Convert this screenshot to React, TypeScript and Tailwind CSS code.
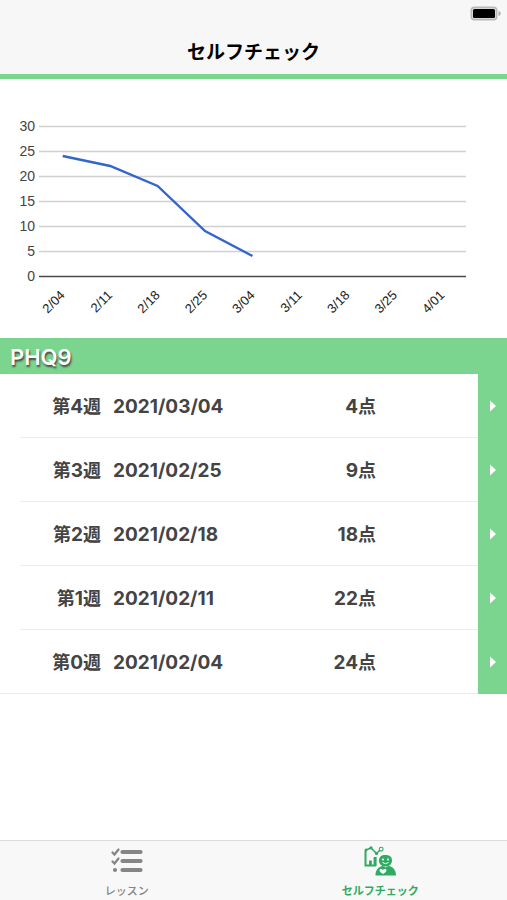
type CheckResult = {
  week: number;
  date: string;
  score: number;
};

const results: CheckResult[] = [
  { week: 4, date: "2021/03/04", score: 4 },
  { week: 3, date: "2021/02/25", score: 9 },
  { week: 2, date: "2021/02/18", score: 18 },
  { week: 1, date: "2021/02/11", score: 22 },
  { week: 0, date: "2021/02/04", score: 24 },
];

const ticks = [0, 5, 10, 15, 20, 25, 30];

const weeks = [
  "2/04",
  "2/11",
  "2/18",
  "2/25",
  "3/04",
  "3/11",
  "3/18",
  "3/25",
  "4/01",
];

const LEFT = 39;
const RIGHT = 466;
const BASE = 197;
const STEP = (RIGHT - LEFT) / weeks.length;

const xOf = (index: number) => LEFT + STEP * (index + 0.5);
const yOf = (score: number) => BASE - score * 5;

const BatteryIcon = () => (
  <svg width="31" height="16" viewBox="0 0 31 16" aria-hidden="true">
    <rect x="0.5" y="0.5" width="27" height="14" rx="4" fill="#b9b9b9" />
    <rect x="2" y="2" width="24" height="11" rx="2.5" fill="#d6d6d6" />
    <rect x="3" y="3" width="22" height="9" rx="1.5" fill="#000" />
    <path d="M28.5 5c1.6.6 2.3 1.4 2.3 2.5s-.7 1.9-2.3 2.5z" fill="#b0b0b0" />
  </svg>
);

const LessonIcon = () => (
  <svg width="32" height="26" viewBox="0 0 32 26" aria-hidden="true">
    <g fill="none" stroke="#858585" strokeLinecap="round">
      <path d="M11.5 4H29.5M11.5 13H29.5M11.5 22H29.5" strokeWidth="4.2" />
      <path d="M1.5 4.5L3.5 6.5L7.5 1.500M1.5 13.5L3.5 15.5L7.5 10.5" strokeWidth="2.2" />
    </g>
    <circle cx="4" cy="22" r="2.1" fill="#858585" />
  </svg>
);

const SelfCheckIcon = () => (
  <svg width="32" height="31" viewBox="0 0 32 31" aria-hidden="true">
    <g fill="none" stroke="#2fab63">
      <path d="M1.5 5V19.5H12" strokeWidth="2" />
      <path d="M2 4L7 2L12.5 7.5L16 4" strokeWidth="1.5" />
      <circle cx="17.2" cy="3.2" r="1.9" strokeWidth="1.1" />
    </g>
    <g fill="#2fab63">
      <circle cx="2" cy="4" r="1.5" />
      <circle cx="7" cy="1.8" r="1.6" />
      <circle cx="12.5" cy="7.5" r="1.6" />
      <rect x="5" y="14.5" width="2.8" height="5" />
      <rect x="9.6" y="11" width="3" height="9" />
      <path d="M21.5 9C26 9 28 11.2 28 14.5S25.5 20.5 21.5 20.5S15 18 15 14.5S17 9 21.5 9Z" />
      <path d="M11.5 29.5C11.5 24 14.5 20.5 19 20L21.5 21.5L24.5 20C29 20.5 32 24 32 29.5Z" />
    </g>
    <circle cx="19" cy="13.5" r="1.1" fill="#fff" />
    <circle cx="24" cy="13.5" r="1.1" fill="#fff" />
    <path d="M18.5 16.5Q21.5 19 24.5 16.5" fill="none" stroke="#fff" />
    <path
      d="M19 28C17 26.7 15.5 25.8 15.5 24.3C15.5 22.7 18 22.3 19 24C20 22.3 22.5 22.7 22.5 24.3C22.5 25.8 21 26.7 19 28Z"
      fill="#fff"
    />
  </svg>
);

const ScoreChart = () => {
  const points = [...results]
    .reverse()
    .map((result, index) => `${xOf(index)},${yOf(result.score)}`)
    .join(" ");

  return (
    <svg
      viewBox="0 0 507 259"
      className="block w-full font-['Liberation_Sans',sans-serif] text-[14px]"
      role="img"
      aria-label="PHQ9"
    >
      {ticks.map((tick) => (
        <g key={tick}>
          <line
            x1={LEFT}
            x2={RIGHT}
            y1={yOf(tick) + 0.5}
            y2={yOf(tick) + 0.5}
            stroke={tick === 0 ? "#4a4a4a" : "#d0d0d0"}
            strokeWidth={tick === 0 ? 1.4 : 1.6}
          />
          <text x="35" y={yOf(tick) + 5} textAnchor="end" fill="#444">
            {tick}
          </text>
        </g>
      ))}
      {weeks.map((week, index) => (
        <text
          key={week}
          textAnchor="end"
          fill="#222"
          fontSize="13"
          transform={`translate(${xOf(index) + 3} 217) rotate(-45)`}
        >
          {week}
        </text>
      ))}
      <polyline points={points} fill="none" stroke="#3366cc" strokeWidth="2.4" />
    </svg>
  );
};

const ResultRow = ({ week, date, score }: CheckResult) => (
  <li className="group flex h-16">
    <a href="#result" className="flex min-w-0 flex-1">
      <span className="flex min-w-0 flex-1 pl-5 group-last:border-b group-last:border-[#ebebeb]">
        <span className="flex flex-1 items-center border-b border-[#ebebeb] pt-1 pr-[102px] group-last:border-b-0">
          <span className="w-[81px] text-right">
            <span className="text-lg">第</span>
            {week}
            <span className="text-lg">週</span>
          </span>
          <span className="ml-3">{date}</span>
          <span className="ml-auto">
            {score}
            <span className="text-lg">点</span>
          </span>
        </span>
      </span>
      <span className="flex w-[29px] items-center justify-center bg-[#7bd58f]">
        <svg width="6" height="12" viewBox="0 0 6 12" aria-hidden="true">
          <path d="M0 0.5L6 6L0 11.5Z" fill="#fff" />
        </svg>
      </span>
    </a>
  </li>
);

const App = () => {
  return (
    <div className="flex min-h-screen flex-col bg-white font-['Inter','Noto_Sans_CJK_JP',sans-serif]">
      <header className="border-b-5 border-[#7bd58f] bg-[#f7f7f7]">
        <div className="flex h-7 items-center justify-end pr-1.5">
          <BatteryIcon />
        </div>
        <h1 className="h-[46px] pt-0.5 text-center text-[19px] leading-[46px] font-bold text-black">
          セルフチェック
        </h1>
      </header>

      <main className="flex-1">
        <ScoreChart />
        <section>
          <h2 className="h-9 bg-[#7bd58f] px-2.5 pt-px text-[22px] leading-9 font-semibold text-white [text-shadow:1px_2px_2px_#444]">
            PHQ9
          </h2>
          <ul className="text-[19px] font-bold text-[#444]">
            {results.map((result) => (
              <ResultRow key={result.week} {...result} />
            ))}
          </ul>
        </section>
      </main>

      <nav className="grid h-[60px] grid-cols-2 border-t border-[#dcdcdc] bg-[#f8f8f8] text-[11px] leading-4">
        <a
          href="#lesson"
          className="flex flex-col items-center justify-between pt-1 pb-px font-medium text-[#858585]"
        >
          <span className="flex h-8 items-center">
            <LessonIcon />
          </span>
          レッスン
        </a>
        <a
          href="#self-check"
          aria-current="page"
          className="flex flex-col items-center justify-between pt-1 pb-px font-bold text-[#2fab63]"
        >
          <span className="flex h-8 items-center">
            <SelfCheckIcon />
          </span>
          セルフチェック
        </a>
      </nav>
    </div>
  );
};

export default App;
